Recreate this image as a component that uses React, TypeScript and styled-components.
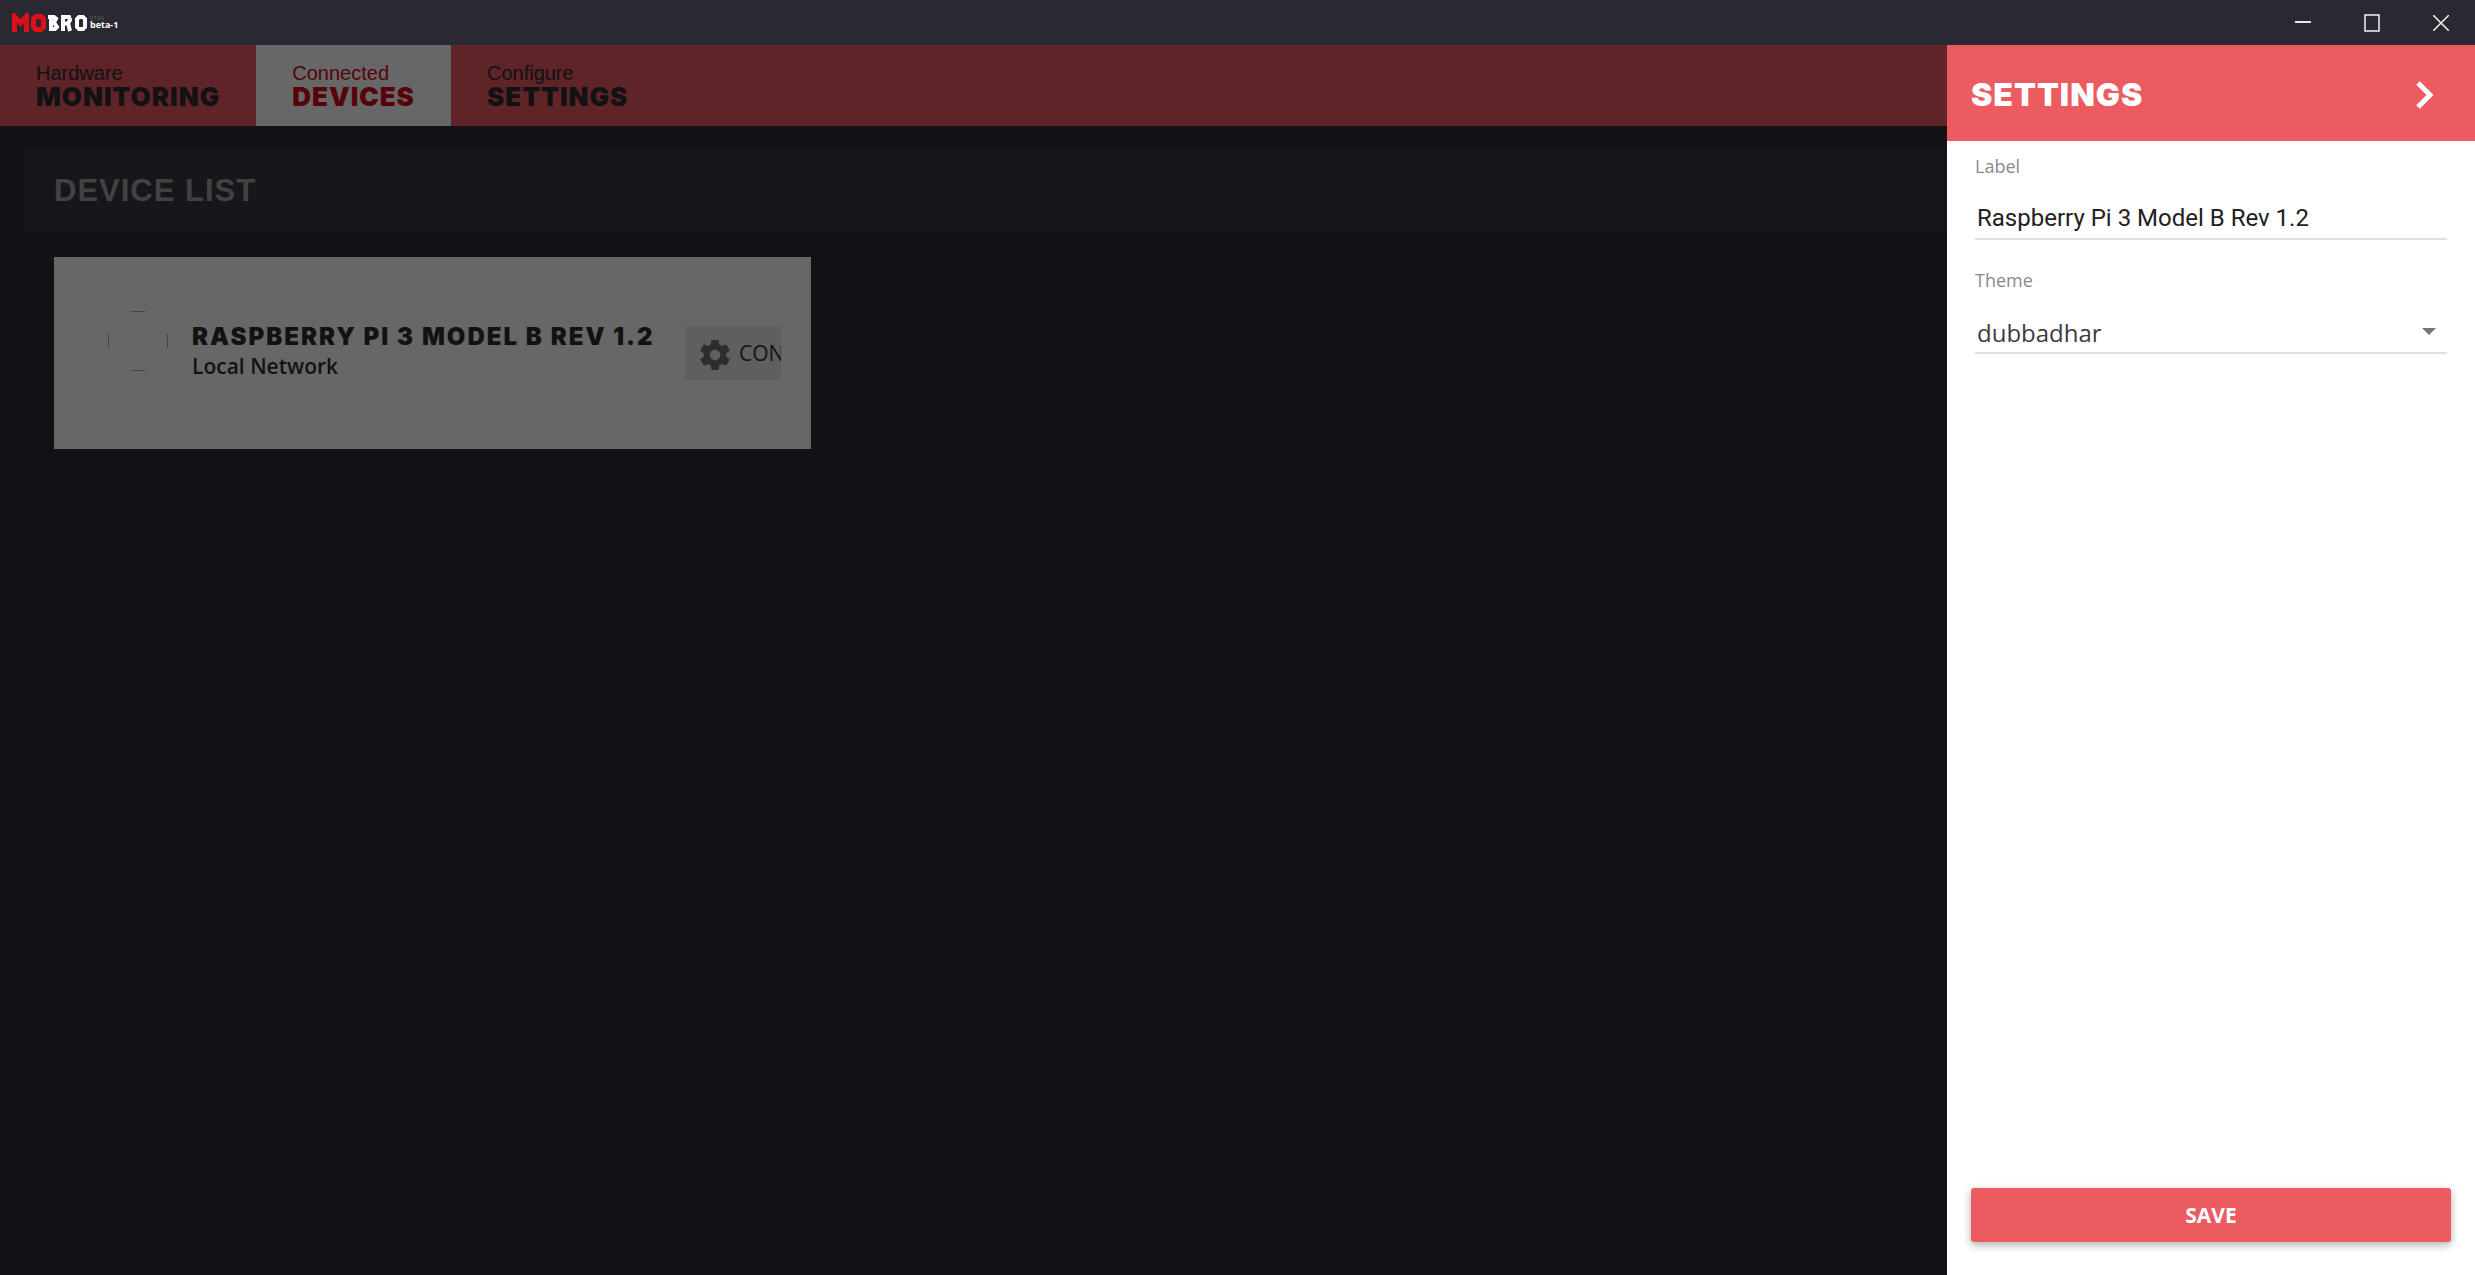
import React from 'react';
import styled, { createGlobalStyle, css } from 'styled-components';

const GlobalStyle = createGlobalStyle`
  *, *::before, *::after { box-sizing: border-box; }
  body { margin: 0; background: #121115; font-family: "Open Sans", "Noto Sans", sans-serif; }
  h1, h2, h3, p { margin: 0; }
  button, input, select { font: inherit; color: inherit; border: 0; background: none; padding: 0; margin: 0; outline: 0; }
`;

const blackHeading = css`
  font-family: "Arial Black", Inter, sans-serif;
  font-weight: 900;
  text-transform: uppercase;
  letter-spacing: 1px;
`;

const Window = styled.div`
  min-height: 100vh;
  display: flex;
  flex-direction: column;
`;

const TitleBar = styled.header`
  height: 45px;
  background: #2a2933;
  display: flex;
  align-items: center;
  justify-content: space-between;
`;

const Brand = styled.div`
  display: flex;
  align-items: center;
  gap: 2px;
  padding-left: 12px;
`;

const Version = styled.div`
  display: flex;
  flex-direction: column;
  color: #ffffff;
  font-size: 9px;
  line-height: 9px;
  font-weight: 700;
`;

const Edition = styled.span`
  color: #6c6b72;
  font-size: 6px;
  line-height: 4px;
  font-weight: 400;
`;

const WindowControls = styled.div`
  display: flex;
`;

const WindowButton = styled.button`
  width: 69px;
  height: 45px;
  display: grid;
  place-items: center;
`;

const Body = styled.div`
  flex: 1;
  display: flex;
`;

const Main = styled.main`
  flex: 1;
  min-width: 0;
`;

const TabBar = styled.nav`
  height: 81px;
  background: #5e2427;
  display: flex;
`;

const Tab = styled.a<{ $active?: boolean }>`
  display: flex;
  flex-direction: column;
  padding: 17px 36px 0;
  text-decoration: none;
  color: ${(p) => (p.$active ? '#560409' : '#121115')};
  background: ${(p) => (p.$active ? '#676767' : 'transparent')};
`;

const TabCaption = styled.span`
  font-family: "Liberation Sans", Arial, sans-serif;
  font-size: 20px;
  line-height: 23px;
`;

const TabTitle = styled.span`
  ${blackHeading}
  font-size: 26px;
  line-height: 23px;
`;

const SectionBar = styled.section`
  margin: 23px 0 0 24px;
  height: 84px;
  padding-left: 30px;
  background: #17161a;
  display: flex;
  align-items: center;
`;

const SectionTitle = styled.h1`
  font-family: "Liberation Sans", Arial, sans-serif;
  font-weight: 700;
  text-transform: uppercase;
  color: #424243;
  font-size: 31px;
  letter-spacing: 1px;
`;

const DeviceCard = styled.article`
  width: 757px;
  height: 192px;
  margin: 24px 0 0 54px;
  padding: 0 30px 0 54px;
  background: #676767;
  color: #111214;
  display: flex;
  align-items: center;
`;

const DeviceImage = styled.div`
  flex: none;
  width: 60px;
  height: 60px;
  margin: 0 24px 24px 0;
`;

const DeviceText = styled.div`
  flex: none;
  width: 493px;
  padding-bottom: 3px;
`;

const DeviceName = styled.h2`
  ${blackHeading}
  font-size: 24px;
  line-height: 30px;
  letter-spacing: 2px;
  white-space: nowrap;
`;

const DeviceNetwork = styled.p`
  font-size: 21px;
  line-height: 29px;
  font-weight: 600;
`;

const ConfigureButton = styled.button`
  flex: 1;
  min-width: 0;
  height: 54px;
  padding-left: 12px;
  border-radius: 3px;
  background: #5f5f5f;
  overflow: hidden;
  display: flex;
  align-items: center;
  gap: 6px;
  font-size: 21px;
  font-weight: 500;
`;

const GearIcon = styled.svg`
  flex: none;
  margin-top: 4px;
`;

const Panel = styled.aside`
  width: 528px;
  background: #ffffff;
  display: flex;
  flex-direction: column;
`;

const PanelHeader = styled.div`
  height: 96px;
  padding: 3px 36px 0 24px;
  background: #eb5b5f;
  color: #ffffff;
  display: flex;
  align-items: center;
  justify-content: space-between;
`;

const PanelTitle = styled.h2`
  ${blackHeading}
  font-size: 32px;
`;

const CloseButton = styled.button`
  display: grid;
  place-items: center;
`;

const Form = styled.form`
  flex: 1;
  display: flex;
  flex-direction: column;
  padding: 12px 24px 33px;
`;

const Field = styled.div`
  display: flex;
  flex-direction: column;
  margin: 0 4px 27px;
`;

const FieldLabel = styled.label`
  color: #8a8a8a;
  font-size: 18px;
  line-height: 26px;
`;

const fieldControl = css`
  height: 61px;
  padding: 18px 2px 0;
  border-bottom: 2px solid #e0e0e0;
  color: #212121;
  font-size: 24px;
`;

const TextInput = styled.input`
  ${fieldControl}
  font-family: Roboto, sans-serif;
`;

const SelectWrap = styled.div`
  display: grid;
  align-items: center;
`;

const Select = styled.select`
  ${fieldControl}
  grid-area: 1 / 1;
  appearance: none;
  padding-top: 20px;
  color: #3a3b3e;
`;

const SelectArrow = styled.svg`
  grid-area: 1 / 1;
  justify-self: end;
  margin: 16px 11px 0 0;
  pointer-events: none;
`;

const SaveButton = styled.button`
  height: 54px;
  margin-top: auto;
  border-radius: 3px;
  background: #eb5b5f;
  color: #ffffff;
  font-size: 21px;
  font-weight: 700;
  box-shadow: 0 3px 8px rgba(0, 0, 0, 0.32);
`;

const Logo = () => (
  <svg width="76" height="20" viewBox="0 0 76 20" role="img" aria-label="MoBro">
    <g fill="none" strokeWidth="5">
      <path d="M2.5 19V3.5L8.5 10L14.5 3.5V19" stroke="#dc1018" />
      <path d="M24 3.5H29L31.5 6V14L29 16.5H24L21.5 14V6Z" stroke="#dc1018" />
      <path d="M36 4H42L44 5.5L42 9.5H39M39 4V16H43L45 14L42 9.5" stroke="#fff" strokeWidth="4" />
      <path d="M51 18V4H57L58 7L56 10.5H53M56 10L58 18" stroke="#fff" strokeWidth="4" />
      <path d="M67 4H71L73 6V14L71 16H67L65 14V6Z" stroke="#fff" strokeWidth="4" />
    </g>
  </svg>
);

export default function App() {
  return (
    <Window>
      <GlobalStyle />
      <TitleBar>
        <Brand>
          <Logo />
          <Version><Edition>V100</Edition>beta-1</Version>
        </Brand>
        <WindowControls>
          <WindowButton aria-label="Minimize">
            <svg width="16" height="16" stroke="#e8e8e8" strokeWidth="2"><path d="M0 7H16" /></svg>
          </WindowButton>
          <WindowButton aria-label="Maximize">
            <svg width="16" height="18" stroke="#f4f4f4" strokeWidth="1.5" fill="none"><path d="M1 1H15V17H1Z" /></svg>
          </WindowButton>
          <WindowButton aria-label="Close">
            <svg width="16" height="16" stroke="#f4f4f4" strokeWidth="1.5"><path d="M0 0L16 16M16 0L0 16" /></svg>
          </WindowButton>
        </WindowControls>
      </TitleBar>
      <Body>
        <Main>
          <TabBar>
            <Tab href="#monitoring"><TabCaption>Hardware</TabCaption><TabTitle>Monitoring</TabTitle></Tab>
            <Tab href="#devices" $active><TabCaption>Connected</TabCaption><TabTitle>Devices</TabTitle></Tab>
            <Tab href="#settings"><TabCaption>Configure</TabCaption><TabTitle>Settings</TabTitle></Tab>
          </TabBar>
          <SectionBar><SectionTitle>Device list</SectionTitle></SectionBar>
          <DeviceCard>
            <DeviceImage>
              <svg width="60" height="60" stroke="#444" fill="none"><path d="M23 .5H37M23 59.5H37M.5 23V37M59.5 23V37" /></svg>
            </DeviceImage>
            <DeviceText>
              <DeviceName>Raspberry Pi 3 Model B Rev 1.2</DeviceName>
              <DeviceNetwork>Local Network</DeviceNetwork>
            </DeviceText>
            <ConfigureButton aria-label="Configure">
              <GearIcon width="36" height="36" viewBox="0 0 24 24" fill="#2d2d2d">
                <path d="M19.43 12.98c.04-.32.07-.64.07-.98s-.03-.66-.07-.98l2.11-1.65c.19-.15.24-.42.12-.64l-2-3.46c-.12-.22-.39-.3-.61-.22l-2.49 1c-.52-.4-1.08-.73-1.69-.98l-.38-2.65C14.46 2.18 14.25 2 14 2h-4c-.25 0-.46.18-.49.42l-.38 2.65c-.61.25-1.17.59-1.69.98l-2.49-1c-.23-.09-.49 0-.61.22l-2 3.46c-.13.22-.07.49.12.64l2.11 1.65c-.04.32-.07.65-.07.98s.03.66.07.98l-2.11 1.65c-.19.15-.24.42-.12.64l2 3.46c.12.22.39.3.61.22l2.49-1c.52.4 1.08.73 1.69.98l.38 2.65c.03.24.24.42.49.42h4c.25 0 .46-.18.49-.42l.38-2.65c.61-.25 1.17-.59 1.69-.98l2.49 1c.23.09.49 0 .61-.22l2-3.46c.12-.22.07-.49-.12-.64l-2.11-1.65zM12 15.5c-1.93 0-3.5-1.57-3.5-3.5s1.57-3.5 3.5-3.5 3.5 1.57 3.5 3.5-1.57 3.5-3.5 3.5z" />
              </GearIcon>
              CONFIGURE
            </ConfigureButton>
          </DeviceCard>
        </Main>
        <Panel>
          <PanelHeader>
            <PanelTitle>Settings</PanelTitle>
            <CloseButton aria-label="Close settings">
              <svg width="30" height="30" fill="none" stroke="#fff" strokeWidth="5"><path d="M9 3L21 15L9 27" /></svg>
            </CloseButton>
          </PanelHeader>
          <Form>
            <Field>
              <FieldLabel htmlFor="label">Label</FieldLabel>
              <TextInput id="label" defaultValue="Raspberry Pi 3 Model B Rev 1.2" />
            </Field>
            <Field>
              <FieldLabel htmlFor="theme">Theme</FieldLabel>
              <SelectWrap>
                <Select id="theme"><option>dubbadhar</option></Select>
                <SelectArrow width="14" height="7" fill="#757575"><path d="M0 0H14L7 7Z" /></SelectArrow>
              </SelectWrap>
            </Field>
            <SaveButton type="button">SAVE</SaveButton>
          </Form>
        </Panel>
      </Body>
    </Window>
  );
}
